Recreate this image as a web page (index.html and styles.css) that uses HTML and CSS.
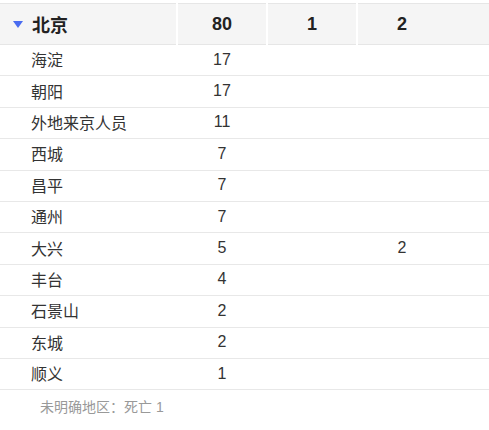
FILE: index.html
```html
<!DOCTYPE html>
<html lang="zh">
<head>
<meta charset="utf-8">
<link rel="stylesheet" href="styles.css">
</head>
<body>
<div class="table">
  <div class="head">
    <div class="hcell name"><span class="tri"></span>北京</div>
    <div class="hcell num">80</div>
    <div class="hcell num">1</div>
    <div class="hcell num last">2</div>
  </div>
  <div class="row"><div class="cell name">海淀</div><div class="cell num">17</div><div class="cell num"></div><div class="cell num last"></div></div>
  <div class="row"><div class="cell name">朝阳</div><div class="cell num">17</div><div class="cell num"></div><div class="cell num last"></div></div>
  <div class="row"><div class="cell name">外地来京人员</div><div class="cell num">11</div><div class="cell num"></div><div class="cell num last"></div></div>
  <div class="row"><div class="cell name">西城</div><div class="cell num">7</div><div class="cell num"></div><div class="cell num last"></div></div>
  <div class="row"><div class="cell name">昌平</div><div class="cell num">7</div><div class="cell num"></div><div class="cell num last"></div></div>
  <div class="row"><div class="cell name">通州</div><div class="cell num">7</div><div class="cell num"></div><div class="cell num last"></div></div>
  <div class="row"><div class="cell name">大兴</div><div class="cell num">5</div><div class="cell num"></div><div class="cell num last">2</div></div>
  <div class="row"><div class="cell name">丰台</div><div class="cell num">4</div><div class="cell num"></div><div class="cell num last"></div></div>
  <div class="row"><div class="cell name">石景山</div><div class="cell num">2</div><div class="cell num"></div><div class="cell num last"></div></div>
  <div class="row"><div class="cell name">东城</div><div class="cell num">2</div><div class="cell num"></div><div class="cell num last"></div></div>
  <div class="row"><div class="cell name">顺义</div><div class="cell num">1</div><div class="cell num"></div><div class="cell num last"></div></div>
  <div class="note">未明确地区：死亡 1</div>
</div>
</body>
</html>
```

FILE: styles.css
```css
html, body {
  margin: 0;
  padding: 0;
  background: #fff;
}
body {
  padding-top: 3px;
  font-family: "Liberation Sans", "Noto Sans CJK SC", sans-serif;
  color: #333;
}
.table {
  width: 489px;
}
.head {
  display: grid;
  grid-template-columns: 176px 88px 88px 1fr;
  column-gap: 2px;
}
.hcell {
  height: 40px;
  background: #f5f5f5;
  border-top: 1px solid #e6e6e6;
  border-bottom: 1px solid #e6e6e6;
  display: flex;
  align-items: center;
  font-size: 18px;
  font-weight: bold;
  color: #222;
}
.hcell.name {
  padding-left: 13px;
}
.tri {
  width: 0;
  height: 0;
  border-left: 5px solid transparent;
  border-right: 5px solid transparent;
  border-top: 7px solid #4a6cf0;
  margin-right: 9px;
  margin-top: 1px;
}
.num {
  justify-content: center;
}
.hcell.last,
.cell.last {
  padding-right: 43px;
}
.row {
  display: grid;
  grid-template-columns: 176px 88px 88px 1fr;
  column-gap: 2px;
  height: 30.4px;
  border-bottom: 1px solid #e8e8e8;
}
.cell {
  display: flex;
  align-items: center;
  font-size: 16px;
  color: #333;
  padding-bottom: 1px;
}
.cell.name {
  padding-left: 31px;
  padding-bottom: 2px;
}
.note {
  padding: 7px 0 0 40px;
  font-size: 14px;
  line-height: 20px;
  color: #999;
}
```
